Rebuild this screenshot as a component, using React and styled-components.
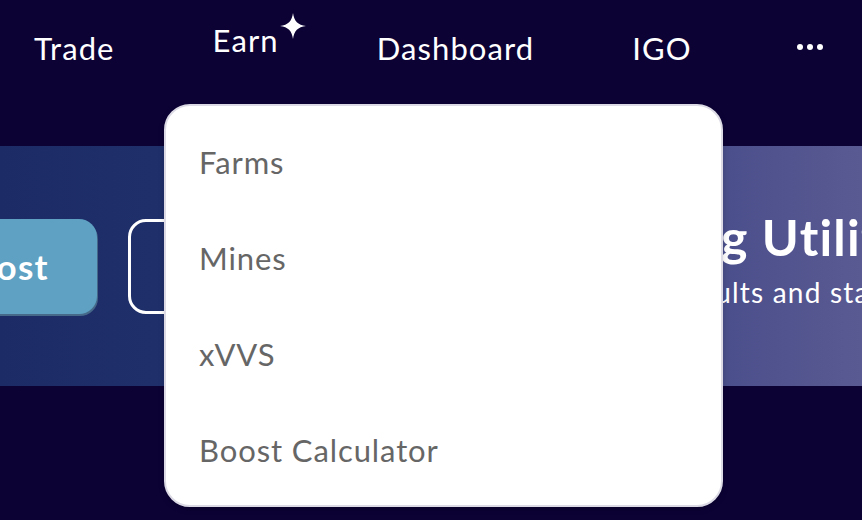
import React from 'react';
import styled, { createGlobalStyle } from 'styled-components';

const GlobalStyle = createGlobalStyle`
  html, body {
    margin: 0;
    padding: 0;
    background: #0c0234;
    font-family: Lato, 'Open Sans', sans-serif;
  }
`;

const Page = styled.div`
  position: relative;
  width: 862px;
  height: 520px;
  overflow: hidden;
  background: #0c0234;
`;

const Nav = styled.nav`
  display: flex;
  align-items: center;
  gap: 98px;
  height: 96px;
  padding-left: 34px;
`;

const NavItem = styled.a`
  position: relative;
  color: #ffffff;
  font-size: 31px;
  letter-spacing: 1.1px;
  text-decoration: none;
  transform: translateY(${p => (p.$raised ? '-8px' : '0')});
`;

const Sparkle = styled.svg`
  position: absolute;
  top: -8px;
  right: -27px;
  width: 26px;
  height: 26px;
`;

const Dots = styled.div`
  display: flex;
  gap: 4px;
  margin-left: 7px;
  margin-top: -2px;

  span {
    width: 6px;
    height: 6px;
    border-radius: 50%;
    background: #ffffff;
  }
`;

const Banner = styled.section`
  margin-top: 50px;
  height: 240px;
  display: flex;
  align-items: center;
  overflow: hidden;
  background: linear-gradient(90deg, #1c2b66 0%, #22336e 35%, #3d4584 70%, #5a5a93 100%);
`;

const BannerInner = styled.div`
  display: flex;
  align-items: center;
  margin-left: -83px;
`;

const Button = styled.button`
  flex-shrink: 0;
  width: 180px;
  height: 95px;
  margin-right: 31px;
  border-radius: 18px;
  font-family: Lato, sans-serif;
  font-size: 35px;
  font-weight: 700;
  letter-spacing: 1.2px;
  color: #ffffff;
  padding: 0 14px 0 0;
  white-space: nowrap;
  border: ${p => (p.$outline ? '3px solid #ffffff' : 'none')};
  background: ${p => (p.$outline ? 'transparent' : '#5ea1c2')};
  box-shadow: ${p => (p.$outline ? 'none' : '1px 2px 0 #46698a')};
`;

const Headline = styled.div`
  flex-shrink: 0;
  margin-left: 202px;
  margin-top: -16px;
  color: #ffffff;
  white-space: nowrap;

  h2 {
    margin: 0;
    font-size: 50px;
    font-weight: 700;
    letter-spacing: 1.2px;
  }

  p {
    margin: 8px 0 0;
    padding-left: 4px;
    font-size: 28px;
    letter-spacing: 1.2px;
  }
`;

const Menu = styled.div`
  position: absolute;
  top: 104px;
  left: 164px;
  width: 555px;
  height: 391px;
  padding-top: 8px;
  box-sizing: content-box;
  background: #ffffff;
  border: 2px solid #dcdbe5;
  border-radius: 26px;
  box-shadow: 0 2px 6px rgba(0, 0, 0, 0.15);
`;

const MenuItem = styled.a`
  display: flex;
  align-items: center;
  height: 96px;
  padding-left: 33px;
  color: #666666;
  font-size: 31px;
  letter-spacing: 0.9px;
  text-decoration: none;
`;

export default function App() {
  return (
    <>
      <GlobalStyle />
      <Page>
        <Nav>
          <NavItem href="#">Trade</NavItem>
          <NavItem href="#" $raised>
            Earn
            <Sparkle viewBox="0 0 24 24">
              <path d="M12 0 C13 7.5 16.5 11 24 12 C16.5 13 13 16.5 12 24 C11 16.5 7.5 13 0 12 C7.5 11 11 7.5 12 0 Z" fill="#ffffff" />
            </Sparkle>
          </NavItem>
          <NavItem href="#">Dashboard</NavItem>
          <NavItem href="#">IGO</NavItem>
          <Dots><span /><span /><span /></Dots>
        </Nav>
        <Banner>
          <BannerInner>
            <Button>Boost</Button>
            <Button $outline>Learn</Button>
            <Headline>
              <h2>Boosting Utility</h2>
              <p>Earn from vaults and staking</p>
            </Headline>
          </BannerInner>
        </Banner>
        <Menu>
          <MenuItem href="#">Farms</MenuItem>
          <MenuItem href="#">Mines</MenuItem>
          <MenuItem href="#">xVVS</MenuItem>
          <MenuItem href="#">Boost Calculator</MenuItem>
        </Menu>
      </Page>
    </>
  );
}
